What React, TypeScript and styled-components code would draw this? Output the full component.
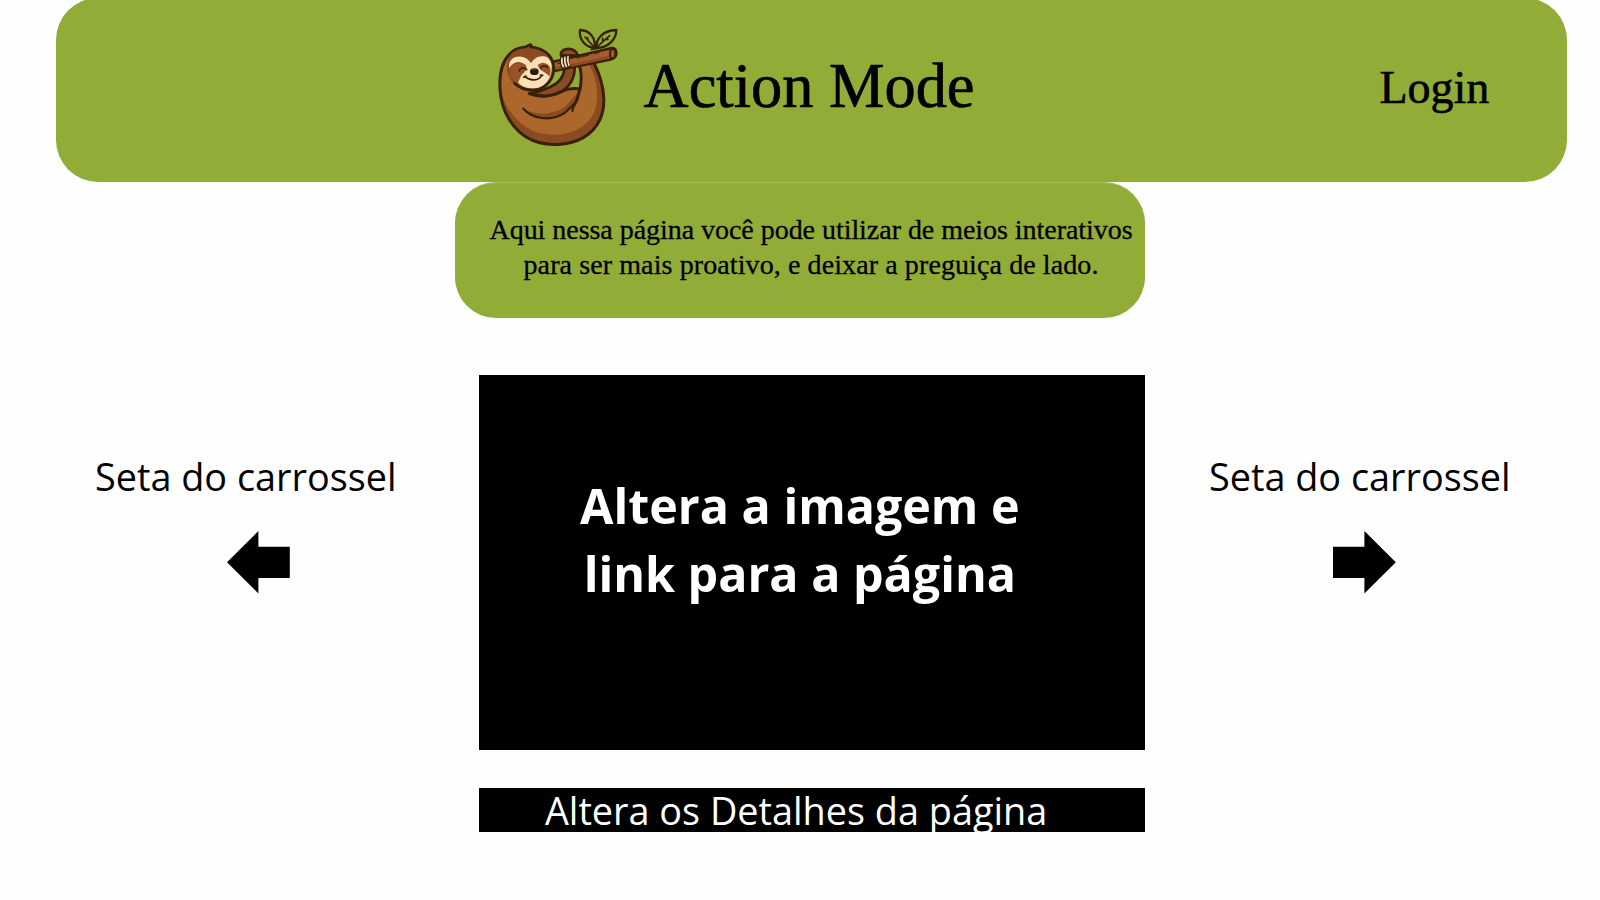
import React from "react";
import styled, { createGlobalStyle } from "styled-components";

const GREEN = "#92ac38";
const SERIF = '"Liberation Serif", "Times New Roman", serif';
const SANS = '"Open Sans", "Noto Sans", sans-serif';

const GlobalStyle = createGlobalStyle`
  * { box-sizing: border-box; }
  body { margin: 0; background: #fefefe; color: #000; }
`;

const Page = styled.div`
  width: 1600px;
  height: 900px;
  overflow: hidden;
  display: flex;
  flex-direction: column;
  background: #fefefe;
`;

const Header = styled.header`
  display: flex;
  align-items: center;
  flex: none;
  width: 1510.5px;
  height: 183.5px;
  margin: -2px 0 0 56.3px;
  padding: 0 77.5px 0 428.7px;
  border-radius: 42px;
  background: ${GREEN};
`;

const Logo = styled.svg`
  width: 145px;
  height: 140px;
  flex: none;
  margin-bottom: 10px;
`;

const Brand = styled.h1`
  margin: 0 0 0 13.6px;
  padding-bottom: 7px;
  font: 400 62.4px/72px ${SERIF};
  white-space: nowrap;
  -webkit-text-stroke: 0.7px #000;
`;

const Login = styled.a`
  margin-left: auto;
  padding-bottom: 3px;
  font: 400 46px/54px ${SERIF};
  color: #000;
  -webkit-text-stroke: 0.6px #000;
`;

const Intro = styled.section`
  flex: none;
  width: 689.5px;
  height: 135.5px;
  margin: 1px 0 0 455.3px;
  padding: 29px 0 0 22px;
  border-radius: 41px;
  background: ${GREEN};
  box-shadow: 0 -1px 0 #a5bb58;
`;

const IntroLine = styled.p<{ $spacing: number }>`
  margin: 0;
  font: 400 28px/35px ${SERIF};
  letter-spacing: ${(p) => p.$spacing}px;
  text-align: center;
  white-space: nowrap;
  -webkit-text-stroke: 0.3px #000;
`;

const Carousel = styled.main`
  display: grid;
  grid-template-columns: 478.6px 666.4px 1fr;
  flex: none;
  height: 374.7px;
  margin-top: 57.3px;
`;

const Side = styled.div`
  display: flex;
  flex-direction: column;
  align-items: flex-start;
  padding-top: 75.7px;
`;

const Caption = styled.span<{ $left: number }>`
  margin-left: ${(p) => p.$left}px;
  font: 400 37.8px/52px ${SANS};
  white-space: nowrap;
`;

const ArrowButton = styled.button<{ $left: number }>`
  display: block;
  width: 62.8px;
  height: 62.5px;
  margin: 28.3px 0 0 ${(p) => p.$left}px;
  padding: 0;
  border: 0;
  background: none;
  svg { display: block; width: 100%; height: 100%; }
`;

const Slide = styled.section`
  padding: 95.5px 24px 0 0;
  background: #000;
  color: #fff;
`;

const SlideTitle = styled.h2`
  margin: 0;
  font: 700 48.4px/68px ${SANS};
  text-align: center;
`;

const Details = styled.footer`
  flex: none;
  width: 666.4px;
  height: 44.3px;
  margin: 37.9px 0 0 478.6px;
  padding-right: 31.5px;
  background: #000;
  color: #fff;
  font: 400 37.8px/46px ${SANS};
  text-align: center;
  white-space: nowrap;
`;

const INK = "#38200c";

function Sloth() {
  return (
    <Logo viewBox="0 0 435 420" fill="none" strokeLinecap="round" strokeLinejoin="round" aria-label="Action Mode">
      {/* body and hanging leg */}
      <path
        d="M92 104C55 125 42 165 45 220C48 290 85 350 140 375C190 395 250 393 295 368C340 342 360 295 356 245C354 205 342 175 328 143L284 150C291 175 292 200 282 226L150 235Z"
        fill="#ac682c"
      />
      <path
        d="M50 235C62 285 110 342 165 355C235 370 305 345 328 290C345 250 335 190 313 150L328 143C348 185 356 210 356 245C358 300 340 342 295 368C245 395 190 395 140 375C85 350 52 295 50 235Z"
        fill="#8b4b20"
      />
      <path d="M115 281C140 305 195 322 240 292C268 275 277 250 283 225C250 220 240 228 215 238C200 244 170 248 140 236Z" fill="#ac682c" />
      <path d="M115 281C150 300 215 305 250 265C267 245 276 235 283 225C277 262 258 285 232 298C190 318 140 308 115 281Z" fill="#8b4b20" />
      {/* gap behind the near arm */}
      <path d="M269 160L284 154C291 180 289 204 281 220C270 219 259 221 248 224C262 206 269 186 269 160Z" fill="#92ac38" />
      <path
        d="M92 104C55 125 42 165 45 220C48 290 85 350 140 375C190 395 250 393 295 368C340 342 360 295 356 245C354 205 342 175 328 146M284 154C292 184 290 213 279 244C275 260 268 270 264 276M133 236C170 250 205 243 234 228C251 219 267 221 282 221"
        stroke={INK}
        strokeWidth="9"
      />
      <path d="M115 281C140 309 195 324 240 293L268 266M265 272L262 288" stroke={INK} strokeWidth="6.5" />
      {/* near arm */}
      <path d="M239 158C237 185 221 205 197 215C175 225 160 231 139 234C170 249 206 242 232 228C258 211 270 187 269 154Z" fill="#8b4b20" stroke={INK} strokeWidth="8" />
      {/* branch */}
      <path d="M228 122C226 107 240 100 255 102C269 104 276 112 279 122Z" fill="#8b4b20" stroke={INK} strokeWidth="8" />
      <path d="M201 141L380 99C390 98 395 106 394 117C393 128 386 131 377 133L207 168Z" fill="#a65c2a" stroke={INK} strokeWidth="8" />
      <path d="M218 160L372 127" stroke="#8b4b20" strokeWidth="8" />
      <path d="M276 129L310 121M329 116L342 113M218 146L232 143" stroke={INK} strokeWidth="3" />
      <ellipse cx="383" cy="116" rx="8" ry="14" fill="#a65c2a" stroke={INK} strokeWidth="6" />
      <path d="M230 128C227 142 229 151 234 158M240 125C237 139 239 149 244 156M250 122C247 138 249 148 254 154" stroke={INK} strokeWidth="9" />
      <path d="M231 130C229 141 231 149 235 155M240 127C238 138 240 147 244 154M249 125C247 136 249 145 252 151" stroke="#efe0c4" strokeWidth="5" />
      {/* leaves */}
      <path d="M329 99C301 96 281 74 285 45C314 46 333 69 329 99ZM334 99C333 70 354 46 394 45C394 72 370 99 334 99Z" fill="#92ac38" stroke={INK} strokeWidth="7" />
      <path d="M326 95L300 66M309 76L308 68M338 94L374 62M353 80L353 69M360 74L369 73M319 104L344 98" stroke={INK} strokeWidth="5" />
      {/* head */}
      <path
        d="M77 119C92 101 111 98 125 94C132 91 134 88 139 90L137 97C169 97 202 119 206 154C210 190 184 222 144 226C104 226 72 205 67 168C65 149 68 132 77 119Z"
        fill="#8b4b20"
      />
      <path
        d="M72 160C70 137 84 123 108 125C120 125 130 132 138 144C147 130 160 121 178 124C192 126 201 142 200 158C200 192 179 220 145 220C115 221 96 207 95 190C96 174 111 168 125 153C103 132 84 142 72 160Z"
        fill="#fbe1b5"
      />
      <path d="M73 164C81 146 100 139 117 148C127 153 127 163 117 173C106 181 105 193 99 202C83 195 73 180 73 164Z" fill="#96532a" />
      <path d="M158 151C167 140 181 141 191 151C199 160 198 176 193 184C185 173 164 169 158 151Z" fill="#96532a" />
      <path d="M87 106C102 94 116 99 125 94C132 91 134 86 139 90L137 96C172 98 203 119 206 154C210 190 184 222 144 226C123 226 103 219 88 205" stroke={INK} strokeWidth="8" />
      <path d="M103 168C105 157 118 156 125 164M167 160C170 151 181 150 187 157" stroke={INK} strokeWidth="5" />
      <path d="M120 185C136 199 161 198 170 181M116 187L123 183M166 180L173 181" stroke={INK} strokeWidth="5" />
      <ellipse cx="148" cy="170" rx="13" ry="10" fill="#29180d" />
      <path d="M142 165C146 162 150 162 153 164" stroke="#66513b" strokeWidth="3" />
    </Logo>
  );
}

function Arrow({ flip }: { flip?: boolean }) {
  return (
    <svg viewBox="0 0 62 62" preserveAspectRatio="none" aria-hidden="true">
      <path d={flip ? "M62 31L31 0V15.5H0V46.5H31V62Z" : "M0 31L31 0V15.5H62V46.5H31V62Z"} fill="#000" />
    </svg>
  );
}

export default function App() {
  return (
    <Page>
      <GlobalStyle />
      <Header>
        <Sloth />
        <Brand>Action Mode</Brand>
        <Login>Login</Login>
      </Header>
      <Intro>
        <IntroLine $spacing={-0.04}>Aqui nessa página você pode utilizar de meios interativos</IntroLine>
        <IntroLine $spacing={0.1}>para ser mais proativo, e deixar a preguiça de lado.</IntroLine>
      </Intro>
      <Carousel>
        <Side>
          <Caption $left={95}>Seta do carrossel</Caption>
          <ArrowButton $left={227.4} aria-label="Anterior">
            <Arrow />
          </ArrowButton>
        </Side>
        <Slide>
          <SlideTitle>
            Altera a imagem e<br />
            link para a página
          </SlideTitle>
        </Slide>
        <Side>
          <Caption $left={64}>Seta do carrossel</Caption>
          <ArrowButton $left={188.4} aria-label="Próximo">
            <Arrow flip />
          </ArrowButton>
        </Side>
      </Carousel>
      <Details>Altera os Detalhes da página</Details>
    </Page>
  );
}
